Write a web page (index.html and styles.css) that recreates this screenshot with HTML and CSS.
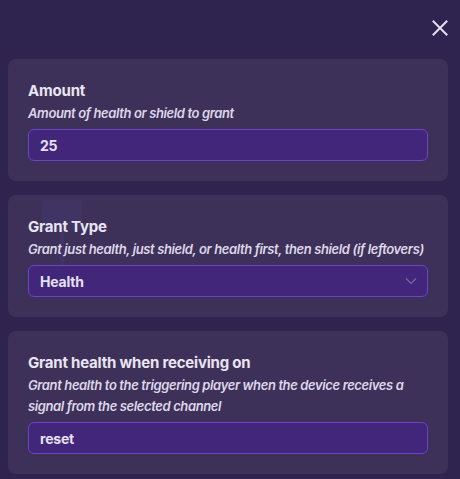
FILE: index.html
```html
<!DOCTYPE html>
<html>
<head>
<meta charset="utf-8">
<link rel="stylesheet" href="styles.css">
</head>
<body>
<div class="panel">
  <div class="topbar">
    <button class="close" aria-label="Close">
      <svg width="16" height="16" viewBox="0 0 16 16"><path d="M1.5 1.5 L14.5 14.5 M14.5 1.5 L1.5 14.5" stroke="#e4e0f0" stroke-width="2" stroke-linecap="square" fill="none"/></svg>
    </button>
  </div>
  <div class="cards">
    <section class="card">
      <div class="title">Amount</div>
      <div class="desc">Amount of health or shield to grant</div>
      <div class="input">25</div>
    </section>
    <section class="card">
      <div class="ghost"><div class="ghost-flag"></div><div class="ghost-stem"></div></div>
      <div class="title">Grant Type</div>
      <div class="desc">Grant just health, just shield, or health first, then shield (if leftovers)</div>
      <div class="input select">
        <span>Health</span>
        <svg width="12" height="8" viewBox="0 0 12 8"><path d="M1 1.5 L6 6.5 L11 1.5" stroke="#7a68a6" stroke-width="1.2" fill="none"/></svg>
      </div>
    </section>
    <section class="card">
      <div class="title">Grant health when receiving on</div>
      <div class="desc">Grant health to the triggering player when the device receives a signal from the selected channel</div>
      <div class="input">reset</div>
    </section>
  </div>
</div>
</body>
</html>
```
FILE: styles.css
```css
html, body {
  margin: 0;
  padding: 0;
  background: #2f2350;
  font-family: Inter, "Noto Sans", sans-serif;
}
.panel {
  padding: 0 12px 0 8px;
}
.topbar {
  height: 59px;
  display: flex;
  justify-content: flex-end;
  align-items: flex-start;
}
.close {
  margin-top: 20px;
  margin-right: 0;
  width: 16px;
  height: 16px;
  padding: 0;
  border: 0;
  background: none;
  display: flex;
}
.cards {
  display: flex;
  flex-direction: column;
  gap: 14px;
}
.card {
  position: relative;
  background: #3e3159;
  border-radius: 8px;
  padding: 20px 20px 20px;
  display: flex;
  flex-direction: column;
}
.ghost {
  position: absolute;
  left: 34px;
  top: 5px;
  width: 40px;
  height: 66px;
}
.ghost-flag {
  width: 40px;
  height: 30px;
  background: rgba(70, 70, 170, 0.12);
  border-radius: 2px;
}
.ghost-stem {
  margin-left: 18px;
  width: 4px;
  height: 36px;
  background: rgba(70, 70, 170, 0.12);
}
.title, .desc, .input {
  position: relative;
}
.title {
  color: #e9e5f2;
  font-weight: 700;
  font-size: 15px;
  line-height: 23px;
  letter-spacing: -0.2px;
}
.desc {
  margin-top: 1px;
  color: #ddd7e9;
  font-style: italic;
  font-weight: 600;
  font-size: 13px;
  line-height: 21px;
  letter-spacing: -0.38px;
}
.input {
  margin-top: 5px;
  height: 32px;
  box-sizing: border-box;
  border: 1px solid #6a45c6;
  border-radius: 6px;
  background: #41267a;
  color: #e6e1f1;
  font-weight: 700;
  font-size: 14px;
  padding: 0 11px;
  display: flex;
  align-items: center;
  letter-spacing: -0.2px;
}
.select {
  justify-content: space-between;
}
.select svg {
  margin-right: -1px;
}
```
